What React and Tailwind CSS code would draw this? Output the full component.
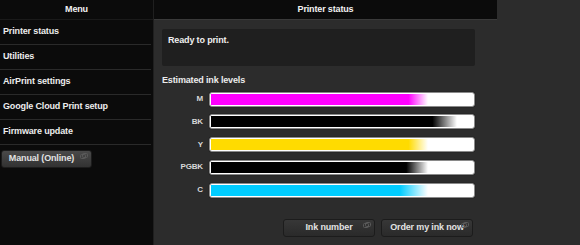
import React from 'react';

const menu = ['Printer status', 'Utilities', 'AirPrint settings', 'Google Cloud Print setup', 'Firmware update']

const inks = [
  { name: 'M', width: 217, fill: 'bg-[linear-gradient(to_right,#ff00ff_0%,#ff00ff_91%,rgba(255,0,255,0)_100%)]' },
  { name: 'BK', width: 246, fill: 'bg-[linear-gradient(to_right,#000_0%,#000_90%,rgba(0,0,0,0)_100%)]' },
  { name: 'Y', width: 217, fill: 'bg-[linear-gradient(to_right,#ffdb00_0%,#ffdb00_91%,rgba(255,219,0,0)_100%)]' },
  { name: 'PGBK', width: 217, fill: 'bg-[linear-gradient(to_right,#000_0%,#000_90%,rgba(0,0,0,0)_100%)]' },
  { name: 'C', width: 217, fill: 'bg-[linear-gradient(to_right,#00ccff_0%,#00ccff_87%,rgba(0,204,255,0)_100%)]' },
]

function LinkIcon () {
  return (
    <svg width="8" height="6" viewBox="0 0 8 6" className="absolute top-[2px] right-[3px]">
      <rect x="2.5" y="0.5" width="5" height="4" rx="1" fill="none" stroke="#5a5a5a" strokeWidth="1" />
      <rect x="0.5" y="1.5" width="5" height="4" rx="1" fill="none" stroke="#5a5a5a" strokeWidth="1" />
    </svg>
  )
}

function Button ({ label, className }) {
  return (
    <div className={`relative h-[18px] flex items-center justify-center rounded-[3px] border border-[#1c1c1c] text-[9px] font-bold text-[#e2e2e2] ${className}`}>
      {label}
      <LinkIcon />
    </div>
  )
}

export default function App () {
  return (
    <div className="w-[580px] h-[245px] flex bg-[#2c2c2c] overflow-hidden font-['Liberation_Sans',Arial,sans-serif] tracking-[-0.15px]">
      <div className="w-[154px] shrink-0 flex flex-col bg-[#0b0b0b] border-r border-[#1f1f1f]">
        <div className="h-[20px] shrink-0 flex items-center justify-center border-b border-[#1a1a1a] text-[9px] font-bold text-[#f2f2f2]">
          Menu
        </div>
        {menu.map((item) => (
          <div key={item} className="h-[25px] shrink-0 flex items-center px-[3px] mr-[2px] border-b border-[#2a2a2a] text-[9px] font-bold text-[#ededed]">
            {item}
          </div>
        ))}
        <Button label="Manual (Online)" className="mt-[5px] ml-[1px] w-[91px] bg-[linear-gradient(#4a4a4a,#323232)] pr-[10px]" />
      </div>

      <div className="flex-1 flex flex-col">
        <div className="w-[343px] h-[20px] shrink-0 flex items-center justify-center bg-[#0b0b0b] border-b border-[#3a3a3a] text-[9px] font-bold text-[#f2f2f2]">
          Printer status
        </div>

        <div className="pl-[8px] flex flex-col">
          <div className="mt-[9px] w-[313px] h-[37px] rounded-[2px] bg-[#1f1f1f] px-[6px] pt-[5px] text-[9px] font-bold text-[#f0f0f0]">
            Ready to print.
          </div>

          <div className="mt-[8px] text-[9px] font-bold text-[#ececec]">Estimated ink levels</div>

          <div className="mt-[4px] flex flex-col gap-[7.75px]">
            {inks.map((ink) => (
              <div key={ink.name} className="flex items-center gap-[6px]">
                <div className="w-[41px] text-right text-[8px] font-bold text-[#d8d8d8]">{ink.name}</div>
                <div className="w-[266px] h-[15px] rounded-[3px] border border-[#8a8a8a] bg-white p-[1px] shadow-[0_0_1px_#000]">
                  <div className={`h-full ${ink.fill}`} style={{ width: ink.width }} />
                </div>
              </div>
            ))}
          </div>

          <div className="mt-[21px] w-[313px] flex justify-end gap-[6px] pr-[2px]">
            <Button label="Ink number" className="w-[92px] bg-[linear-gradient(#373737,#2a2a2a)]" />
            <Button label="Order my ink now" className="w-[92px] bg-[linear-gradient(#373737,#2a2a2a)]" />
          </div>
        </div>
      </div>
    </div>
  )
}
